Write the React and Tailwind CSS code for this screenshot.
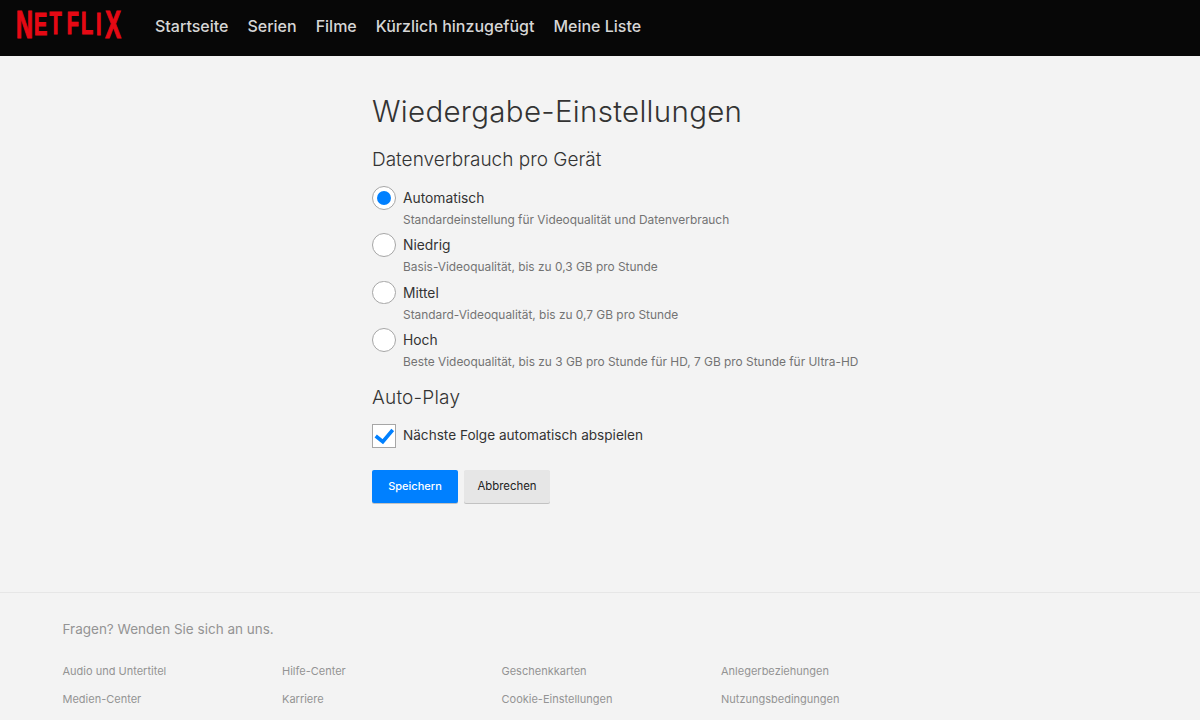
const navItems = ["Startseite", "Serien", "Filme", "Kürzlich hinzugefügt", "Meine Liste"];

const qualityOptions = [
  { label: "Automatisch", hint: "Standardeinstellung für Videoqualität und Datenverbrauch", checked: true },
  { label: "Niedrig", hint: "Basis-Videoqualität, bis zu 0,3 GB pro Stunde" },
  { label: "Mittel", hint: "Standard-Videoqualität, bis zu 0,7 GB pro Stunde" },
  { label: "Hoch", hint: "Beste Videoqualität, bis zu 3 GB pro Stunde für HD, 7 GB pro Stunde für Ultra-HD" },
];

const footerLinks = [
  "Audio und Untertitel",
  "Hilfe-Center",
  "Geschenkkarten",
  "Anlegerbeziehungen",
  "Medien-Center",
  "Karriere",
  "Cookie-Einstellungen",
  "Nutzungsbedingungen",
];

// bowed wordmark: outer letters are taller, so each letter gets its own size
const logoLetters = [
  { c: "N", x: 0, y: 30, size: 38 },
  { c: "E", x: 29, y: 26.5, size: 32 },
  { c: "T", x: 54, y: 25.5, size: 32 },
  { c: "F", x: 82, y: 25.5, size: 32 },
  { c: "L", x: 105, y: 26, size: 32 },
  { c: "I", x: 129, y: 26.5, size: 32 },
  { c: "X", x: 144, y: 30, size: 38 },
];

const Logo = () => (
  <svg width="110" height="36" viewBox="0 0 110 36" className="shrink-0 overflow-visible">
    <text
      transform="scale(0.62 1)"
      fill="#e50914"
      stroke="#e50914"
      strokeWidth="1.2"
      fontFamily="'Liberation Sans', sans-serif"
      fontWeight="700"
    >
      {logoLetters.map((l) => (
        <tspan key={l.c} x={l.x} y={l.y} fontSize={l.size}>
          {l.c}
        </tspan>
      ))}
    </text>
  </svg>
);

const QualityOption = ({ option }) => (
  <div className="flex h-[47.4px] gap-[7.5px]">
    <div className="flex size-[23.5px] items-center justify-center rounded-full border border-[#a6a6a6] bg-white">
      {option.checked && <div className="size-[14px] rounded-full bg-[#0080ff]"></div>}
    </div>
    <div>
      <p className="h-[24px] text-[13.8px] leading-[25px] text-[#333333]">{option.label}</p>
      <p className="text-[11.9px] leading-[20px] text-[#737373]">{option.hint}</p>
    </div>
  </div>
);

const App = () => {
  return (
    <div className="flex h-[720px] flex-col overflow-hidden bg-[#f3f3f3] font-['Inter',sans-serif]">
      <header className="flex h-[56px] shrink-0 items-center gap-[29px] bg-[#070707] pb-[4px] pl-[16px]">
        <Logo />
        <nav className="flex items-center gap-[19px]">
          {navItems.map((item) => (
            <a key={item} className="text-[16px] font-medium text-[#d6d6d6]">
              {item}
            </a>
          ))}
        </nav>
      </header>

      <main className="ml-[372px] h-[536px] shrink-0 pt-[37px]">
        <h1 className="text-[29.5px] leading-[36px] font-light tracking-[0.3px] text-[#333333]">
          Wiedergabe-Einstellungen
        </h1>
        <h2 className="mt-[19px] text-[19px] leading-[24px] font-light text-[#333333]">Datenverbrauch pro Gerät</h2>
        <div className="mt-[14px]">
          {qualityOptions.map((option) => (
            <QualityOption key={option.label} option={option} />
          ))}
        </div>
        <h2 className="mt-[10px] text-[19px] leading-[24px] font-light tracking-[0.2px] text-[#333333]">Auto-Play</h2>
        <div className="mt-[14px] flex items-center gap-[7px]">
          <div className="flex size-[24px] items-center justify-center border border-[#a6a6a6] bg-white">
            <svg width="20" height="18" viewBox="0 0 20 18" fill="none">
              <path d="M1.7 9 8.8 14.7 18.7 3" stroke="#0080ff" strokeWidth="3.6" />
            </svg>
          </div>
          <p className="text-[13.6px] text-[#333333]">Nächste Folge automatisch abspielen</p>
        </div>
        <div className="mt-[22px] flex gap-[6px]">
          <button className="h-[33px] w-[86px] rounded-[2px] bg-[#0080ff] text-[11px] font-medium text-white shadow-[0_1px_0_rgba(0,0,0,0.2)]">
            Speichern
          </button>
          <button className="h-[33px] w-[86px] rounded-[2px] bg-[#e6e6e6] text-[11.4px] text-[#222222] shadow-[0_1px_0_rgba(0,0,0,0.2)]">
            Abbrechen
          </button>
        </div>
      </main>

      <footer className="grow border-t border-[#e6e6e6] pl-[62.5px] pt-[27px]">
        <p className="text-[13.5px] leading-[18px] text-[#949494]">Fragen? Wenden Sie sich an uns.</p>
        <div className="mt-[24px] grid w-[878px] grid-cols-4 gap-y-[10px]">
          {footerLinks.map((link) => (
            <a key={link} className="text-[11px] leading-[18px] text-[#949494]">
              {link}
            </a>
          ))}
        </div>
      </footer>
    </div>
  );
};

export default App;
